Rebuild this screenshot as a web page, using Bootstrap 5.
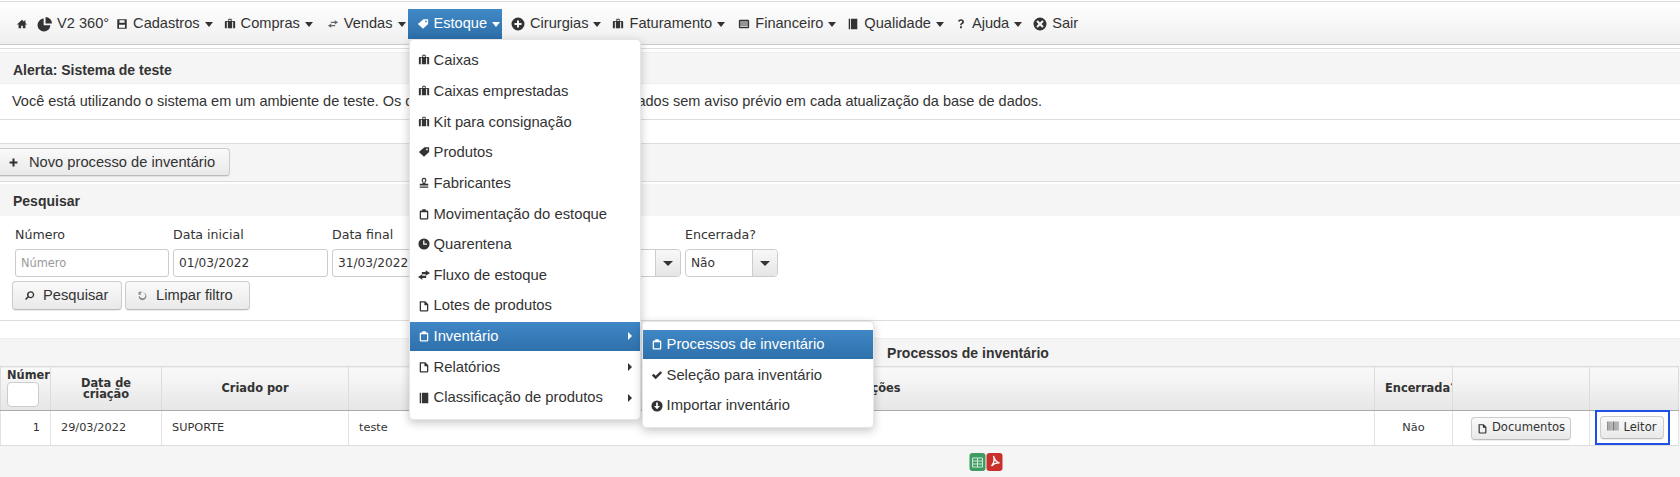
<!DOCTYPE html>
<html lang="pt-BR">
<head>
<meta charset="utf-8">
<title>Inventário</title>
<link href="https://cdn.jsdelivr.net/npm/bootstrap@5.3.0/dist/css/bootstrap.min.css" rel="stylesheet">
<style>
html,body{height:477px;overflow:hidden;}
body{background:#fff;color:#333;font-family:"Liberation Sans",Arial,sans-serif;font-size:14.5px;padding-top:1px;}
.ic{width:12px;height:12px;fill:#333;flex:none;}
.ic-lg{width:15px;height:15px;}
.ic-md{width:14px;height:14px;}
.ic-soft{fill:#666;}
.topbar{height:44px;border-top:1px solid #ddd;border-bottom:1px solid #ccc;background:linear-gradient(#fff,#efefef);display:flex;align-items:flex-start;padding:7px 0 0 7px;flex-wrap:nowrap;justify-content:flex-start;}
.topbar .nav{flex-wrap:nowrap;gap:0;}
.topbar .nav-link{display:flex;align-items:center;gap:5px;height:30px;padding:0 2px 0 9px;color:#333;white-space:nowrap;font-size:14.6px;}
.topbar .nav-link.tight-r{padding-right:0;}
.topbar .nav-link.tight-l{padding-left:7px;}
.topbar .nav-link.loose-l{padding-left:12px;}
.topbar .nav-link.mid-l{padding-left:11px;}
.topbar .dropdown-toggle::after{margin-left:0;border-top:.36em solid;border-right:.32em solid transparent;border-left:.32em solid transparent;border-bottom:0;}
.topbar .nav-link.is-on{background:linear-gradient(#4189c7,#2c6ea8);color:#fff;}
.is-on .ic,.menu-on .ic{fill:#fff;}
.drop-one{top:30px;left:1px;width:232px;margin:0;padding:6px 0 5px;border:1px solid #e6e6e6;border-radius:4px;box-shadow:0 3px 10px rgba(0,0,0,.22);z-index:20;}
.drop-one li{position:relative;}
.drop-one .dropdown-item{display:flex;align-items:center;gap:4px;height:28.67px;margin-bottom:2px;padding:0 9px 0 8px;color:#333;font-size:14.8px;}
.drop-one .dropdown-item.menu-on{background:linear-gradient(#3f87c6,#2e70aa);color:#fff;}
.drop-one .sub-arrow{margin-left:auto;width:0;height:0;border-left:4px solid #333;border-top:4px solid transparent;border-bottom:4px solid transparent;margin-right:-1px;}
.menu-on .sub-arrow{border-left-color:#fff;}
.drop-two{top:-1px;left:232px;width:232px;padding:8px 0 5px;}
.gap-line{height:4px;border-bottom:1px solid #ddd;}
.panel-alert{margin-top:3px;border-top:1px solid #eee;}
.panel-head{background:#f5f5f5;font-weight:700;height:31px;padding:5px 13px 0;display:flex;align-items:center;font-size:14px;border-bottom:1px solid #eee;}
.panel-text{height:36px;padding:1px 12px 0;display:flex;align-items:center;border-bottom:1px solid #ddd;font-size:14.5px;}
.blank-a{height:24px;border-bottom:1px solid #ddd;}
.tool-strip{height:38px;background:#f5f5f5;padding-top:4px;border-bottom:1px solid #ddd;}
.btn-soft{display:inline-flex;align-items:center;gap:8px;background:linear-gradient(#fafafa,#e9e9e9);border:1px solid #ccc;border-bottom-color:#bbb;border-radius:4px;color:#333;font-size:14.7px;box-shadow:0 1px 1px rgba(0,0,0,.08);white-space:nowrap;}
.btn-soft .ic{width:11px;height:11px;}
.btn-new{height:28px;width:230px;padding:0 8px;gap:10px;border-left:0;border-top-left-radius:0;border-bottom-left-radius:0;}
.search-box{margin-top:2px;height:137px;border-bottom:1px solid #ddd;}
.search-box .panel-head{height:32px;padding:3px 13px 0;border-bottom:0;}
.search-fields{display:flex;padding:11px 0 0 15px;gap:4px;font-family:"DejaVu Sans",Verdana,sans-serif;font-size:12.6px;}
.fld{width:154px;}
.fld.wide{width:155px;}
.fld.hid{width:191px;margin-left:-1px;}
.fld.end{width:93px;}
.fld-label{display:block;height:22px;margin:0;line-height:16px;white-space:nowrap;color:#333;}
.fld .form-control{height:28px;padding:0 5px;font-size:12.2px;border-radius:3px;border-color:#ccc;color:#333;font-family:"DejaVu Sans",Verdana,sans-serif;box-shadow:none;}
.fld .form-control::placeholder{color:#999;font-size:11.4px;}
.combo{display:flex;height:28px;border:1px solid #ccc;border-radius:4px;background:#fff;overflow:hidden;}
.combo-val{flex:1;padding:0 5px;line-height:26px;font-size:12.2px;}
.combo-btn{width:25px;background:linear-gradient(#f8f8f8,#e5e5e5);border-left:1px solid #ccc;display:flex;align-items:center;justify-content:center;}
.combo-btn::after{content:"";border-top:5px solid #333;border-left:5px solid transparent;border-right:5px solid transparent;}
.search-btns{display:flex;gap:3px;padding:4px 0 0 12px;}
.search-btns .btn-soft{height:29px;padding:0 11px;}
.btn-a{width:110px;}
.btn-b{width:125px;}
.table-zone{margin-top:17px;height:140px;background:#f5f5f5;border-top:1px solid #eee;}
.grid-title{height:27px;display:flex;align-items:center;justify-content:center;font-weight:700;font-size:14px;padding:1px 0 0 256px;}
.grid-tab{table-layout:fixed;width:1678px;margin:0;border-collapse:collapse;font-family:"DejaVu Sans",Verdana,sans-serif;--bs-table-bg:transparent;}
.grid-tab th{height:44px;background:linear-gradient(#fafafa,#e6e6e6);border:1px solid #dcdcdc;border-bottom:1px solid #aaa;padding:0 10px;font-size:11.4px;line-height:10.5px;text-align:center;vertical-align:middle;color:#333;overflow:hidden;white-space:nowrap;}
.grid-tab td{height:33px;background:#fff;border:1px solid #e2e2e2;border-bottom-color:#ddd;padding:0 10px;font-size:11.3px;vertical-align:middle;color:#333;}
.w1{width:50px;}.w2{width:111px;}.w3{width:187px;}.w4{width:1026px;}.w5{width:78px;}.w6{width:137px;}.w7{width:89px;}
.grid-tab .th-num{text-align:left;padding:0 0 0 6px;}
.grid-tab .th-obs{padding-right:14px;}
.num-filter{display:block;width:32px;height:25px;margin:2px 0 0 0;background:#fff;border:1px solid #ccc;border-radius:4px;}
.btn-cell{display:inline-flex;align-items:center;gap:4px;height:23px;padding:0 9px;font-size:11.6px;justify-content:center;}
.btn-doc{width:100px;}
.btn-lei{width:64px;padding:0 4px;}
.btn-soft .ic-bar{width:12px;height:10px;margin-top:-4px;}
.grid-tab .td-lei{padding:0;text-align:center;}
.lei-frame{display:inline-flex;align-items:center;justify-content:center;width:75px;height:35px;border:2px solid #1f50e6;vertical-align:middle;margin:-1px 0 0 -4px;}
.export-row{display:flex;justify-content:center;gap:0;padding:7px 0 0 292px;}
.exp{width:17px;height:18px;}
</style>
</head>
<body>
<svg width="0" height="0" class="d-none">
<symbol id="i-home" viewBox="0 0 14 14"><path d="M7 2 1 7.500h2V12h3V9h2v3h3V7.500h2l-2-1.800V3h-1.500v1.400z"/></symbol>
<symbol id="i-pie" viewBox="0 0 14 14"><path d="M6.200 1.500a6 6 0 1 0 6.300 6.300H6.200z"/><path d="M8 0v6h6a6 6 0 0 0-6-6z"/></symbol>
<symbol id="i-save" viewBox="0 0 14 14"><path fill-rule="evenodd" d="M1.500 1.500h11v11h-11zM4 2.500v3h6v-3zM3.500 8v3.500h7V8z"/></symbol>
<symbol id="i-case" viewBox="0 0 14 14"><path fill-rule="evenodd" d="M5 3.500V2.200C5 1.500 5.500 1 6.200 1h1.600C8.500 1 9 1.500 9 2.200v1.300h3c.6 0 1 .4 1 1V12H1V4.500c0-.6.4-1 1-1zm1-1.500v1.500h2V2zM3.300 4.500V12h1.200V4.500zm6.200 0V12h1.200V4.500z"/></symbol>
<symbol id="i-swap" viewBox="0 0 14 14"><path d="M9 2.500 13 5 9 7.500V5.800H4.500V4.300H9zM5 6.500v1.700h4.500v1.500H5v1.800L1 9z"/></symbol>
<symbol id="i-swap2" viewBox="0 0 14 14"><path d="M9 1.500 14 4.800 9 8V6H4.500V3.500H9zM5 6v2h4.500v2.500H5v2L0 9.200z"/></symbol>
<symbol id="i-tag" viewBox="0 0 14 14"><path fill-rule="evenodd" d="M7.500 2H13v5.500l-6 5.500-6-5.500zM10.500 3.500a1 1 0 1 0 0 2 1 1 0 0 0 0-2z" transform="translate(0 -.5)"/></symbol>
<symbol id="i-plusc" viewBox="0 0 14 14"><path fill-rule="evenodd" d="M7 .5a6.500 6.500 0 1 1 0 13 6.500 6.500 0 0 1 0-13zM6 3.500V6H3.500v2H6v2.500h2V8h2.500V6H8V3.500z"/></symbol>
<symbol id="i-list" viewBox="0 0 14 14"><path fill-rule="evenodd" d="M2.500 2h9c.8 0 1.500.7 1.500 1.500v7c0 .8-.7 1.500-1.500 1.500h-9C1.700 12 1 11.300 1 10.500v-7C1 2.700 1.700 2 2.500 2zM2.500 4v1.300h9V4zm0 2.400v1.300h9V6.400zm0 2.400v1.300h9V8.800z"/></symbol>
<symbol id="i-book" viewBox="0 0 14 14"><path d="M2 1h1.500v12H2zM4.500 1H12v12H4.500z"/></symbol>
<symbol id="i-help" viewBox="0 0 14 14"><path d="M3.500 3.800C4 2.300 5.300 1.500 7 1.500c2 0 3.500 1.100 3.500 2.900 0 1.400-.9 2.100-1.800 2.700-.7.500-.9.800-.9 1.500H6c0-1.400.4-2 1.300-2.700.7-.5 1.100-.9 1.100-1.500 0-.7-.6-1.100-1.400-1.100-.8 0-1.400.4-1.700 1.200zM5.900 9.700H8v2.300H5.900z"/></symbol>
<symbol id="i-xc" viewBox="0 0 14 14"><path fill-rule="evenodd" d="M7 .5a6.500 6.500 0 1 1 0 13 6.500 6.500 0 0 1 0-13zM4.800 3.300 3.300 4.800 5.500 7 3.300 9.200l1.500 1.500L7 8.500l2.200 2.200 1.500-1.500L8.500 7l2.200-2.200-1.500-1.500L7 5.500z"/></symbol>
<symbol id="i-stamp" viewBox="0 0 14 14"><path fill-rule="evenodd" d="M7 1a2.800 2.800 0 0 1 2 4.800c-.4.400-.5.800-.5 1.200 0 .5.200.8.700.8H12V10H2V7.800h2.800c.5 0 .7-.3.700-.8 0-.4-.1-.8-.5-1.200A2.800 2.800 0 0 1 7 1zm0 1.300A1.500 1.500 0 0 0 5.500 3.800c0 .9.800 1.300 1 2.800h1c.2-1.500 1-1.900 1-2.800A1.500 1.500 0 0 0 7 2.300zM2 11h10v1.500H2z"/></symbol>
<symbol id="i-clip" viewBox="0 0 14 14"><path fill-rule="evenodd" d="M5 1.500h4V3h1.500c.8 0 1.500.7 1.500 1.500V12c0 .8-.7 1.500-1.500 1.500h-7C2.700 13.500 2 12.800 2 12V4.500C2 3.700 2.700 3 3.500 3H5zM3.500 5v7h7V5z"/></symbol>
<symbol id="i-clock" viewBox="0 0 14 14"><path fill-rule="evenodd" d="M7 .5a6.500 6.500 0 1 1 0 13 6.500 6.500 0 0 1 0-13zM6 3v5h4.500V6.500H7.500V3z"/></symbol>
<symbol id="i-file" viewBox="0 0 14 14"><path fill-rule="evenodd" d="M2 1.500h6.500l3.500 3.500v7c0 .8-.7 1.500-1.500 1.500h-7C2.700 13.500 2 12.800 2 12zM3.500 3v9h7V6H7.500V3z"/></symbol>
<symbol id="i-check" viewBox="0 0 14 14"><path d="M1 7.500 3 5.500l2.500 2.500L11 2.500l2 2-7.500 7.500z"/></symbol>
<symbol id="i-down" viewBox="0 0 14 14"><path fill-rule="evenodd" d="M7 .5a6.500 6.500 0 1 1 0 13 6.500 6.500 0 0 1 0-13zM6 3v4H3.500L7 10.800 10.500 7H8V3z"/></symbol>
<symbol id="i-plus" viewBox="0 0 14 14"><path d="M5.700 2h2.600v3.700H12v2.600H8.300V12H5.700V8.300H2V5.700h3.700z"/></symbol>
<symbol id="i-search" viewBox="0 0 14 14"><path fill-rule="evenodd" d="M8.500 1.500a4.500 4.500 0 1 1-2.700 8.100L2.700 12.700 1.300 11.300l3.100-3.100A4.500 4.500 0 0 1 8.500 1.500zm0 1.700a2.800 2.800 0 1 0 0 5.600 2.800 2.800 0 0 0 0-5.600z"/></symbol>
<symbol id="i-undo" viewBox="0 0 14 14"><path d="M2 2.500 6 2 5 3.300A5 5 0 1 1 2 8h1.400A3.700 3.700 0 1 0 4.200 4.400L5.500 6H2z" opacity=".75"/></symbol>
<symbol id="i-bar" viewBox="0 0 17 13"><path d="M0 0h1v13H0zM2 0h.7v13H2zM3.500 0h1.200v13H3.500zM5.500 0h.7v13h-.7zM7 0h.7v13H7zM8.500 0h1.200v13H8.500zM10.500 0h.7v13h-.7zM12 0h.7v13H12zM13.500 0h1.200v13h-1.200zM15.500 0h.7v13h-.7z" fill="#666"/></symbol>
</svg>

<nav class="topbar navbar">
  <ul class="nav">
    <li class="nav-item"><a class="nav-link tight-r" href="#"><svg class="ic"><use href="#i-home"/></svg></a></li>
    <li class="nav-item"><a class="nav-link tight-r" href="#"><svg class="ic ic-lg"><use href="#i-pie"/></svg>V2 360°</a></li>
    <li class="nav-item"><a class="nav-link tight-l dropdown-toggle" href="#"><svg class="ic"><use href="#i-save"/></svg>Cadastros</a></li>
    <li class="nav-item"><a class="nav-link dropdown-toggle" href="#"><svg class="ic"><use href="#i-case"/></svg>Compras</a></li>
    <li class="nav-item"><a class="nav-link loose-l dropdown-toggle" href="#"><svg class="ic ic-soft"><use href="#i-swap"/></svg>Vendas</a></li>
    <li class="nav-item dropdown position-relative">
      <a class="nav-link dropdown-toggle is-on" href="#"><svg class="ic"><use href="#i-tag"/></svg>Estoque</a>
      <ul class="dropdown-menu show drop-one">
        <li><a class="dropdown-item" href="#"><svg class="ic"><use href="#i-case"/></svg>Caixas</a></li>
        <li><a class="dropdown-item" href="#"><svg class="ic"><use href="#i-case"/></svg>Caixas emprestadas</a></li>
        <li><a class="dropdown-item" href="#"><svg class="ic"><use href="#i-case"/></svg>Kit para consignação</a></li>
        <li><a class="dropdown-item" href="#"><svg class="ic"><use href="#i-tag"/></svg>Produtos</a></li>
        <li><a class="dropdown-item" href="#"><svg class="ic"><use href="#i-stamp"/></svg>Fabricantes</a></li>
        <li><a class="dropdown-item" href="#"><svg class="ic"><use href="#i-clip"/></svg>Movimentação do estoque</a></li>
        <li><a class="dropdown-item" href="#"><svg class="ic"><use href="#i-clock"/></svg>Quarentena</a></li>
        <li><a class="dropdown-item" href="#"><svg class="ic"><use href="#i-swap2"/></svg>Fluxo de estoque</a></li>
        <li><a class="dropdown-item" href="#"><svg class="ic"><use href="#i-file"/></svg>Lotes de produtos</a></li>
        <li>
          <a class="dropdown-item menu-on" href="#"><svg class="ic"><use href="#i-clip"/></svg>Inventário<span class="sub-arrow"></span></a>
          <ul class="dropdown-menu show drop-one drop-two">
            <li><a class="dropdown-item menu-on" href="#"><svg class="ic"><use href="#i-clip"/></svg>Processos de inventário</a></li>
            <li><a class="dropdown-item" href="#"><svg class="ic"><use href="#i-check"/></svg>Seleção para inventário</a></li>
            <li><a class="dropdown-item" href="#"><svg class="ic"><use href="#i-down"/></svg>Importar inventário</a></li>
          </ul>
        </li>
        <li><a class="dropdown-item" href="#"><svg class="ic"><use href="#i-file"/></svg>Relatórios<span class="sub-arrow"></span></a></li>
        <li><a class="dropdown-item" href="#"><svg class="ic"><use href="#i-book"/></svg>Classificação de produtos<span class="sub-arrow"></span></a></li>
      </ul>
    </li>
    <li class="nav-item"><a class="nav-link dropdown-toggle" href="#"><svg class="ic ic-md"><use href="#i-plusc"/></svg>Cirurgias</a></li>
    <li class="nav-item"><a class="nav-link dropdown-toggle" href="#"><svg class="ic"><use href="#i-case"/></svg>Faturamento</a></li>
    <li class="nav-item"><a class="nav-link mid-l dropdown-toggle" href="#"><svg class="ic"><use href="#i-list"/></svg>Financeiro</a></li>
    <li class="nav-item"><a class="nav-link dropdown-toggle" href="#"><svg class="ic"><use href="#i-book"/></svg>Qualidade</a></li>
    <li class="nav-item"><a class="nav-link dropdown-toggle" href="#"><svg class="ic"><use href="#i-help"/></svg>Ajuda</a></li>
    <li class="nav-item"><a class="nav-link" href="#"><svg class="ic ic-md"><use href="#i-xc"/></svg>Sair</a></li>
  </ul>
</nav>
<div class="gap-line"></div>

<section class="panel-alert">
  <div class="panel-head">Alerta: Sistema de teste</div>
  <div class="panel-text">Você está utilizando o sistema em um ambiente de teste. Os dados podem ser apagados ou alterados sem aviso prévio em cada atualização da base de dados.</div>
</section>
<div class="blank-a"></div>

<div class="tool-strip">
  <button type="button" class="btn-soft btn-new"><svg class="ic"><use href="#i-plus"/></svg>Novo processo de inventário</button>
</div>

<section class="search-box">
  <div class="panel-head">Pesquisar</div>
  <div class="search-fields">
    <div class="fld"><label class="fld-label">Número</label><input class="form-control" placeholder="Número"></div>
    <div class="fld wide"><label class="fld-label">Data inicial</label><input class="form-control" value="01/03/2022"></div>
    <div class="fld wide"><label class="fld-label">Data final</label><input class="form-control" value="31/03/2022"></div>
    <div class="fld hid"><label class="fld-label">Situação</label><div class="combo"><span class="combo-val"></span><span class="combo-btn"></span></div></div>
    <div class="fld end"><label class="fld-label">Encerrada?</label><div class="combo"><span class="combo-val">Não</span><span class="combo-btn"></span></div></div>
  </div>
  <div class="search-btns">
    <button type="button" class="btn-soft btn-a"><svg class="ic"><use href="#i-search"/></svg>Pesquisar</button>
    <button type="button" class="btn-soft btn-b"><svg class="ic ic-soft"><use href="#i-undo"/></svg>Limpar filtro</button>
  </div>
</section>

<section class="table-zone">
  <div class="grid-title">Processos de inventário</div>
  <table class="table grid-tab">
    <colgroup><col class="w1"><col class="w2"><col class="w3"><col class="w4"><col class="w5"><col class="w6"><col class="w7"></colgroup>
    <thead>
      <tr>
        <th class="th-num">Número<span class="num-filter"></span></th>
        <th>Data de<br>criação</th>
        <th>Criado por</th>
        <th class="th-obs">Observações</th>
        <th>Encerrada?</th>
        <th></th>
        <th></th>
      </tr>
    </thead>
    <tbody>
      <tr>
        <td class="text-end">1</td>
        <td>29/03/2022</td>
        <td>SUPORTE</td>
        <td>teste</td>
        <td class="text-center">Não</td>
        <td class="text-center"><button type="button" class="btn-soft btn-cell btn-doc"><svg class="ic"><use href="#i-file"/></svg>Documentos</button></td>
        <td class="td-lei"><span class="lei-frame"><button type="button" class="btn-soft btn-cell btn-lei"><svg class="ic-bar"><use href="#i-bar"/></svg>Leitor</button></span></td>
      </tr>
    </tbody>
  </table>
  <div class="export-row">
    <svg class="exp" viewBox="0 0 16 18"><rect x="0" y="0" width="16" height="18" rx="3" fill="#3f9b62"/><path d="M3 5h10v9H3z" fill="none" stroke="#cfe8d8" stroke-width="1"/><path d="M3 8h10M3 11h10M8 5v9" stroke="#cfe8d8" stroke-width="1"/></svg>
    <svg class="exp" viewBox="0 0 16 18"><rect x="0" y="0" width="16" height="18" rx="3" fill="#c9302c"/><path d="M7 3c1 3 1.500 6-2 10 3-3 5-3.500 8-3-3-.5-5-3-6-7z" fill="none" stroke="#fff" stroke-width="1.300"/></svg>
  </div>
</section>
<script src="https://cdn.jsdelivr.net/npm/bootstrap@5.3.0/dist/js/bootstrap.bundle.min.js"></script>
</body>
</html>
